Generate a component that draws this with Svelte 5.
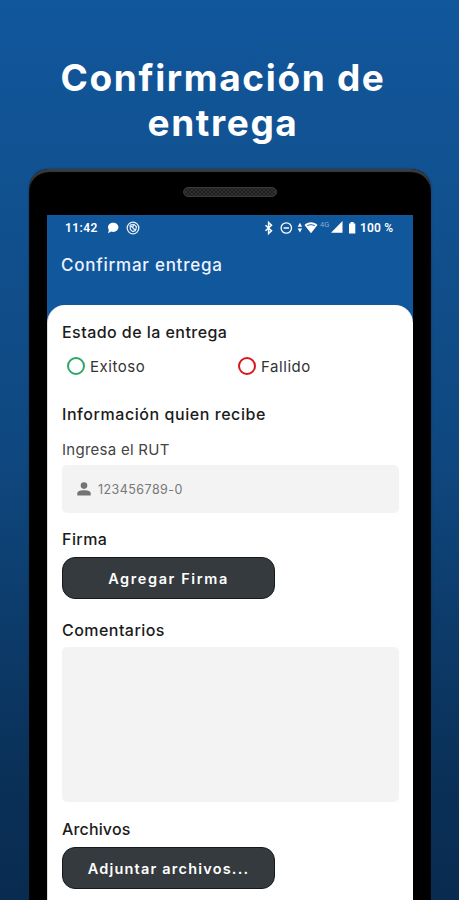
<script>
    let status = '';
    let rut = '';
    let comments = '';

    const options = [
        { value: 'exitoso', label: 'Exitoso' },
        { value: 'fallido', label: 'Fallido' }
    ];
</script>

<div class="promo">
    <h1 class="promo-title">
        <span class="promo-line1">Confirmación de</span><br />
        <span class="promo-line2">entrega</span>
    </h1>

    <div class="phone">
        <svg class="phone-speaker" width="94" height="10" viewBox="0 0 94 10">
            <defs>
                <pattern id="mesh" width="4" height="4" patternUnits="userSpaceOnUse">
                    <circle cx="1" cy="1" r="0.8" fill="#080808" />
                    <circle cx="3" cy="3" r="0.8" fill="#080808" />
                </pattern>
            </defs>
            <rect x="0.5" y="0.5" width="93" height="9" rx="4.5" fill="#303030" stroke="#3a3a3a" />
            <rect x="2" y="1" width="90" height="8" rx="4" fill="url(#mesh)" />
        </svg>

        <div class="screen">
            <div class="statusbar">
                <span class="clock">11:42</span>
                <svg class="icon-chat" width="12" height="12" viewBox="0 0 12 12">
                    <path d="M6.2 0.8c3 0 5.2 1.9 5.2 4.5s-2.2 4.6-5.2 4.6c-.7 0-1.4-.1-2-.3L1 11.2l.9-3.1C1.3 7.3 1 6.4 1 5.3 1 2.7 3.2.8 6.2.8z" fill="#fff" />
                </svg>
                <svg class="icon-ball" width="14" height="14" viewBox="0 0 14 14" fill="none" stroke="#e4ecfa">
                    <circle cx="7" cy="7" r="5.8" stroke-width="1.3" />
                    <path d="M4 4.2l4-.9 2.500 2.4-1 3.900-2.800 1M4 4.200l.4 4.200 2.300 2.200M4.500 4.500l5 5M7.800 3.600L6.500 7" stroke-width="1.2" />
                </svg>
                <span class="spacer"></span>
                <svg width="92" height="16" viewBox="264 220 92 16">
                    <path d="M265.5 225.2l6 5.6-2.900 2.700v-11l2.900 2.700-6 5.600" fill="none" stroke="#fff" stroke-width="1.5" />
                    <circle cx="286.3" cy="228" r="5.2" fill="none" stroke="#fff" stroke-width="1.3" />
                    <path d="M283.600 228h5.400" stroke="#fff" stroke-width="1.5" />
                    <path d="M297.700 226.800l2.200-4 2.200 4zM297.700 228.500h4.400l-2.200 4z" fill="#fff" />
                    <path d="M304.500 225c3.500-3.800 9.500-3.800 13 0l-6.500 8.300z" fill="#fff" />
                    <path d="M307.200 225.500q3.800-1.800 7.600 0" fill="none" stroke="#11579c" stroke-width="0.9" />
                    <text x="320" y="226.5" class="net">4G</text>
                    <path d="M331 232.800L342.500 221v11.800z" fill="#fff" />
                    <path d="M349 223.500h1.500v-1.500h3.200v1.500h1.600v10H349z" fill="#fff" />
                </svg>
                <span class="battery">100 %</span>
            </div>

            <div class="appbar">Confirmar entrega</div>

            <div class="card">
                <h2 class="heading">Estado de la entrega</h2>
                <div class="options">
                    {#each options as option}
                        <label class="option">
                            <input type="radio" name="estado" class={option.value} value={option.value} bind:group={status} />
                            <span>{option.label}</span>
                        </label>
                    {/each}
                </div>

                <h2 class="heading info">Información quien recibe</h2>
                <label class="rut-label" for="rut">Ingresa el RUT</label>
                <div class="rut-field">
                    <svg width="14" height="14" viewBox="0 0 14 14" fill="#747474">
                        <circle cx="7" cy="3.6" r="3.3" />
                        <path d="M0.3 13.5v-2.200C0.300 9 3.500 8.200 7 8.200s6.700.8 6.700 3.100v2.200z" />
                    </svg>
                    <input id="rut" type="text" placeholder="123456789-0" bind:value={rut} />
                </div>

                <h2 class="heading firma">Firma</h2>
                <button class="btn btn-firma">Agregar Firma</button>

                <h2 class="heading comentarios">Comentarios</h2>
                <textarea class="comments" bind:value={comments}></textarea>

                <h2 class="heading archivos">Archivos</h2>
                <button class="btn btn-archivos">Adjuntar archivos...</button>
            </div>
        </div>
    </div>
</div>

<style>
    :global(body) {
        margin: 0;
        overflow: hidden;
    }

    .promo, .promo * {
        box-sizing: border-box;
    }

    .promo {
        width: 459px;
        height: 900px;
        overflow: hidden;
        background: linear-gradient(180deg, #11579c 0%, #115292 18%, #0f4880 50%, #0a3159 85%, #092b50 100%);
        font-family: Inter, "Open Sans", sans-serif;
    }

    .promo-title {
        height: 169px;
        margin: 0;
        padding: 55px 13px 0 0;
        color: #fff;
        font-size: 37px;
        font-weight: 700;
        line-height: 45px;
        text-align: center;
        white-space: nowrap;
    }

    .promo-line1 {
        letter-spacing: 1.65px;
    }

    .promo-line2 {
        letter-spacing: 1.6px;
    }

    .phone {
        width: 402px;
        height: 760px;
        margin-left: 29px;
        padding: 0 18px;
        border-radius: 20px 20px 0 0;
        background: #000;
        box-shadow: inset 0 3px 1px #3b3b3b, 0 0 2px #0b3158;
    }

    .phone-speaker {
        display: block;
        height: 46px;
        margin: 0 auto;
        padding: 18px 0;
    }

    .screen {
        height: 685px;
        display: flex;
        flex-direction: column;
        background: #11579c;
    }

    .statusbar {
        display: flex;
        align-items: center;
        height: 26px;
        padding: 0 19px 0 18px;
        color: #fff;
        font-family: Roboto, sans-serif;
        font-size: 12px;
        font-weight: 600;
    }

    .clock {
        width: 33px;
        letter-spacing: 0.4px;
    }

    .icon-chat {
        margin-left: 9px;
    }

    .icon-ball {
        margin-left: 7px;
    }

    .spacer {
        flex: 1;
    }

    .net {
        font-size: 7.5px;
        font-weight: 400;
        fill: #86acd5;
    }

    .battery {
        width: 34px;
        margin-left: 4px;
        white-space: nowrap;
        letter-spacing: 0.2px;
    }

    .appbar {
        height: 64px;
        padding: 12px 0 0 14px;
        color: #edf3ff;
        font-size: 17px;
        line-height: 24px;
        letter-spacing: 0.75px;
        font-weight: 500;
    }

    .card {
        flex: 1;
        padding: 17px 14px 0 14px;
        border-left: 1px solid #ddd;
        border-radius: 18px 18px 0 0;
        background: #fff;
    }

    .heading {
        margin: 0;
        color: #1b1b1b;
        font-size: 16px;
        font-weight: 500;
        line-height: 20px;
        letter-spacing: 0.45px;
        white-space: nowrap;
    }

    .heading.info {
        letter-spacing: 0.56px;
    }

    .options {
        display: flex;
        height: 18px;
        margin: 15px 0 29px 5px;
    }

    .option {
        display: flex;
        flex: none;
        align-items: center;
        width: 171px;
        gap: 5px;
        color: #333;
        font-size: 15px;
        letter-spacing: 0.55px;
    }

    .option:last-child {
        width: auto;
    }

    .option input {
        appearance: none;
        width: 18px;
        height: 18px;
        margin: 0;
        border: 2px solid #2fa567;
        border-radius: 50%;
    }

    .option input.fallido {
        border-color: #d9181c;
    }

    .rut-label {
        display: block;
        margin: 16px 0 5px;
        color: #444;
        font-size: 15px;
        line-height: 20px;
        letter-spacing: 0.27px;
    }

    .rut-field {
        display: flex;
        align-items: center;
        gap: 7px;
        height: 48px;
        padding-left: 15px;
        border-radius: 5px;
        background: #f3f3f3;
    }

    .rut-field input {
        width: 200px;
        padding: 0;
        border: 0;
        outline: 0;
        background: none;
        font-family: inherit;
        font-size: 12.5px;
        letter-spacing: 0.45px;
    }

    .rut-field input::placeholder {
        color: #777;
        opacity: 1;
    }

    .heading.firma {
        margin: 16px 0 8px;
    }

    .heading.comentarios {
        margin: 21px 0 7px;
    }

    .heading.archivos {
        margin: 17px 0 8px;
        letter-spacing: 0.15px;
    }

    .btn {
        display: block;
        width: 213px;
        height: 42px;
        padding: 0;
        border: 1px solid #15191b;
        border-radius: 13px;
        background: #343a3d;
        color: #fff;
        font-family: inherit;
        font-size: 14.5px;
        font-weight: 600;
    }

    .btn-firma {
        letter-spacing: 1.6px;
    }

    .btn-archivos {
        letter-spacing: 1.2px;
    }

    .comments {
        display: block;
        width: 100%;
        height: 155px;
        border: 0;
        border-radius: 5px;
        resize: none;
        outline: 0;
        background: #f3f3f3;
    }
</style>
